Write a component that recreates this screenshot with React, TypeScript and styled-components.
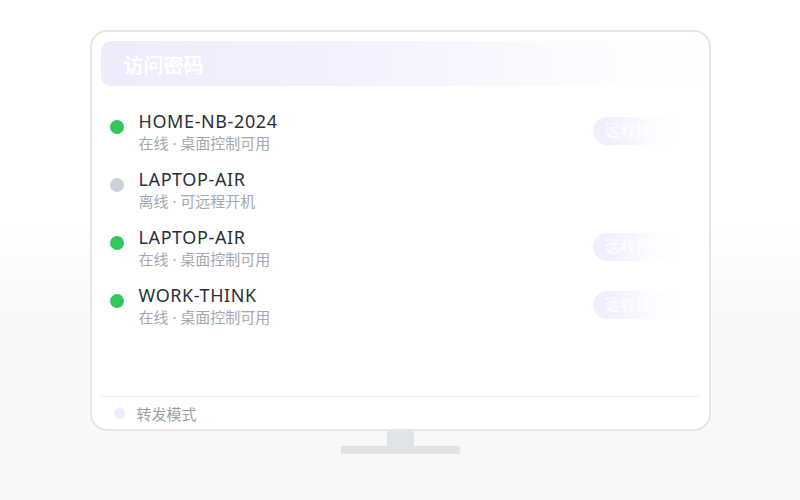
import React from "react";
import styled, { createGlobalStyle } from "styled-components";

const GlobalStyle = createGlobalStyle`
  html, body { margin: 0; padding: 0; }
  body {
    font-family: "Noto Sans", "Noto Sans CJK SC", sans-serif;
    background: #ffffff;
  }
`;

const Page = styled.div`
  width: 800px;
  height: 500px;
  box-sizing: border-box;
  padding-top: 30px;
  display: flex;
  flex-direction: column;
  align-items: center;
  background: linear-gradient(to bottom, #ffffff 0%, #ffffff 45%, #f9f9fa 62%, #f8f8f9 100%);
`;

const Monitor = styled.div`
  width: 621px;
  height: 401px;
  box-sizing: border-box;
  border: 2px solid #e4e6ea;
  border-radius: 17px;
  background: #ffffff;
  padding: 9px 9px 0 9px;
  display: flex;
  flex-direction: column;
  position: relative;
  overflow: hidden;
`;

const TitleBar = styled.div`
  height: 45px;
  flex: none;
  border-radius: 10px;
  background: linear-gradient(to right, #efebfd 0%, #f4f2fe 45%, #fbfaff 75%, #ffffff 100%);
  display: flex;
  align-items: center;
  padding-left: 23px;
  box-sizing: border-box;
  border-right: 1px solid #eef0f4;
`;

const Title = styled.span`
  font-family: "Noto Sans CJK SC", sans-serif;
  font-size: 20px;
  font-weight: 700;
  line-height: 26px;
  margin-top: 3px;
  color: #ffffff;
`;

const DeviceList = styled.div`
  flex: 1;
  display: flex;
  flex-direction: column;
  padding: 23px 0 0 9px;
`;

const Row = styled.div`
  height: 58px;
  display: flex;
  align-items: flex-start;
`;

const StatusDot = styled.span<{ $online: boolean }>`
  width: 14px;
  height: 14px;
  border-radius: 50%;
  margin-top: 11px;
  flex: none;
  background: ${(p) => (p.$online ? "#34c85a" : "#cdd1d9")};
`;

const Info = styled.div`
  margin-left: 15px;
  display: flex;
  flex-direction: column;
  flex: 1;
`;

const Name = styled.span`
  font-family: "Noto Sans", "Noto Sans CJK SC", sans-serif;
  font-size: 18px;
  line-height: 24px;
  color: #2b3038;
  letter-spacing: 0.6px;
`;

const Sub = styled.span`
  font-family: "Noto Sans", "Noto Sans CJK SC", sans-serif;
  font-size: 15px;
  line-height: 20px;
  color: #a3a8b1;
`;

const ControlButton = styled.span`
  margin-top: 8px;
  margin-right: 21px;
  height: 28px;
  padding: 0 11px;
  border-radius: 14px;
  background: #f1eefe;
  color: #ffffff;
  font-family: "Liberation Serif", serif;
  font-size: 16px;
  line-height: 28px;
  flex: none;
`;

const Footer = styled.div`
  height: 32px;
  flex: none;
  border-top: 1px solid #eceef2;
  display: flex;
  align-items: center;
  padding-left: 13px;
  margin-right: 1px;
`;

const ModeDot = styled.span`
  width: 11px;
  height: 11px;
  border-radius: 50%;
  background: #efedfd;
  flex: none;
`;

const ModeLabel = styled.span`
  margin-left: 12px;
  font-family: "Noto Sans CJK SC", sans-serif;
  font-size: 15px;
  color: #9aa0aa;
`;

/* white wash that fades out the right edge of the screen content */
const EdgeFade = styled.div`
  position: absolute;
  top: 0;
  right: 0;
  bottom: 34px;
  width: 100px;
  pointer-events: none;
  background: linear-gradient(
    to right,
    rgba(255, 255, 255, 0) 0%,
    rgba(255, 255, 255, 0.85) 45%,
    rgba(255, 255, 255, 0.95) 70%,
    rgba(255, 255, 255, 0.85) 100%
  );
`;

const Neck = styled.div`
  width: 27px;
  height: 15px;
  background: #e0e3e8;
  flex: none;
`;

const Base = styled.div`
  width: 119px;
  height: 8px;
  background: #e0e3e8;
  flex: none;
`;

type Device = { name: string; online: boolean; status: string };

const devices: Device[] = [
  { name: "HOME-NB-2024", online: true, status: "在线 · 桌面控制可用" },
  { name: "LAPTOP-AIR", online: false, status: "离线 · 可远程开机" },
  { name: "LAPTOP-AIR", online: true, status: "在线 · 桌面控制可用" },
  { name: "WORK-THINK", online: true, status: "在线 · 桌面控制可用" },
];

export default function App() {
  return (
    <>
      <GlobalStyle />
      <Page>
        <Monitor>
          <TitleBar>
            <Title>访问密码</Title>
          </TitleBar>
          <DeviceList>
            {devices.map((d, i) => (
              <Row key={i}>
                <StatusDot $online={d.online} />
                <Info>
                  <Name>{d.name}</Name>
                  <Sub>{d.status}</Sub>
                </Info>
                {d.online && <ControlButton>远程控制</ControlButton>}
              </Row>
            ))}
          </DeviceList>
          <Footer>
            <ModeDot />
            <ModeLabel>转发模式</ModeLabel>
          </Footer>
          <EdgeFade />
        </Monitor>
        <Neck />
        <Base />
      </Page>
    </>
  );
}
